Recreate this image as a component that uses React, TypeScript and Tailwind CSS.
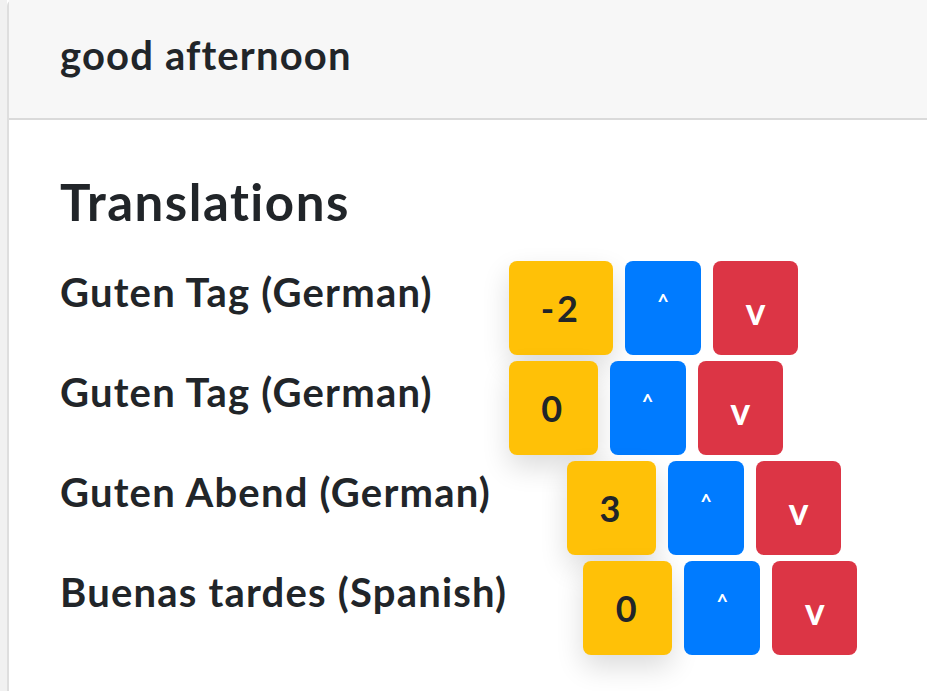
import React from "react";

const rows = [
  { label: "Guten Tag (German)", score: "-2" },
  { label: "Guten Tag (German)", score: "0" },
  { label: "Guten Abend (German)", score: "3" },
  { label: "Buenas tardes (Spanish)", score: "0" },
];

export default function App() {
  return (
    <div
      className="flex h-[691px] w-full overflow-hidden bg-white text-[#212529]"
      style={{ fontFamily: "Lato, 'Noto Sans', sans-serif" }}
    >
      <div className="w-[7px] shrink-0 bg-[#f1f1f1]" />
      <div className="flex flex-1 flex-col rounded-tl-[6px] border-l-2 border-[#dedede]">
        <div className="h-[120px] shrink-0 border-b-2 border-[#dadada] bg-[#f7f7f7] pl-[51px] pt-[35px]">
          <div className="text-[40px] font-bold leading-[40px] tracking-[1.15px]">good afternoon</div>
        </div>
        <div className="flex flex-col pl-[51px]">
          <h2 className="mt-[56px] text-[51px] font-bold leading-[51px] tracking-[1.5px]">Translations</h2>
          <div className="mt-[34px] flex flex-col gap-[6px]">
            {rows.map((r, i) => (
              <div key={i} className="flex items-start">
                <div className="pt-[7px] text-[40px] font-bold leading-[48px] tracking-[1.2px]">{r.label}</div>
                <div className="ml-[76px] flex gap-[12px]">
                  <div className="flex h-[94px] min-w-[89px] items-center justify-center rounded-[8px] bg-[#ffc107] px-[32px] text-[36px] font-bold tracking-[3px] text-[#212529] shadow-[0_12px_28px_rgba(0,0,0,0.14)]">
                    {r.score}
                  </div>
                  <div className="flex h-[94px] w-[76px] items-start justify-center rounded-[8px] bg-[#007bff] pt-[30px] text-[20px] font-bold leading-[20px] text-white">
                    ^
                  </div>
                  <div className="flex h-[94px] w-[85px] items-center justify-center rounded-[8px] bg-[#dc3545] pt-[4px] text-[38px] font-bold text-white">
                    v
                  </div>
                </div>
              </div>
            ))}
          </div>
        </div>
      </div>
    </div>
  );
}
